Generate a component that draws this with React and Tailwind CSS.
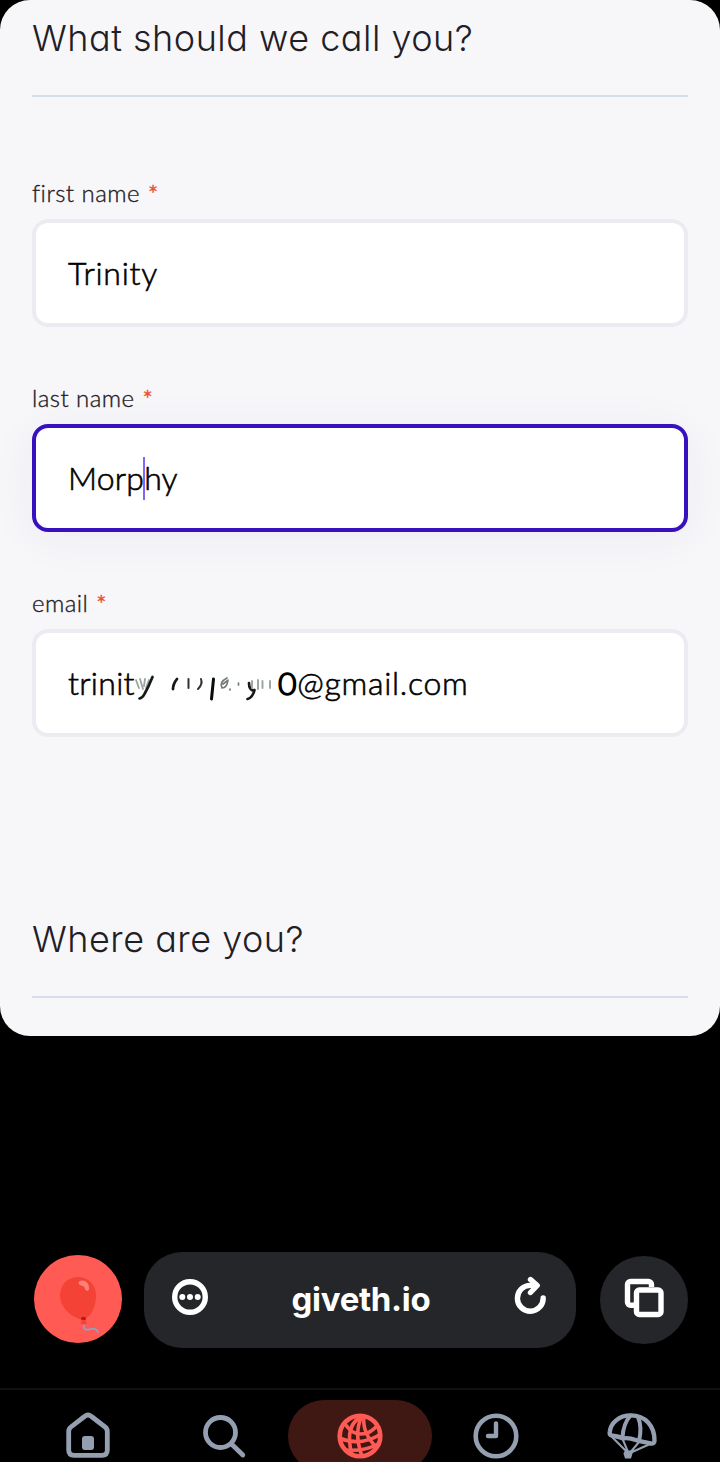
import React from "react";

function SectionTitle({ children }) {
  return (
    <div className="flex h-[77px] items-start border-b-2 border-[#d7ddea]">
      <h2 className="-mt-[2px] font-['Inter',sans-serif] text-[36px] leading-[40px] font-light tracking-[0.5px] whitespace-nowrap text-[#1f2025] [font-feature-settings:'cv11','ss03']">
        {children}
      </h2>
    </div>
  );
}

function Field({ label, focused, children }) {
  return (
    <div>
      <div className="flex h-[44px] items-start pt-[4px] font-['Lato',sans-serif] text-[24px] leading-[28px] font-light text-[#1f2025] [-webkit-text-stroke:0.35px] [font-variant-ligatures:none]">
        <span className="tracking-[0.45px]">{label}</span>
        <span className="ml-[8px] font-normal text-[#ee4f32]">*</span>
      </div>
      <div
        className={
          "flex h-[108px] items-center rounded-[16px] border-4 bg-white px-8 font-['Lato',sans-serif] text-[32px] leading-[40px] font-light text-black [-webkit-text-stroke:0.6px] [font-variant-ligatures:none] " +
          (focused
            ? "border-[#3811bf] shadow-[0_6px_48px_rgba(33,42,90,0.05)]"
            : "border-[#ebecf2]")
        }
      >
        {children}
      </div>
    </div>
  );
}

function Smudges() {
  return (
    <svg width="142" height="36" viewBox="134 666 142 36" className="shrink-0" fill="none" strokeLinecap="round">
      <path d="M136 681l3 8M140 680l3 10M145 680l-1 7M149 681l-3 8" stroke="#9ba39f" strokeWidth="1.8" />
      <path d="M152.500 678q-4 10-8 17-2 4-5 4.500" stroke="#151a18" strokeWidth="2.700" />
      <path d="M177 680q-4 5-4 10" stroke="#111815" strokeWidth="2.800" />
      <path d="M188.500 680v9M201 680q2 5-3 10" stroke="#2d3431" strokeWidth="2" />
      <path d="M213.500 680q-1 10-2 20" stroke="#080c0a" strokeWidth="3" />
      <path d="M227 679q-8 4-5 10q5 0 6-8M223 685l4-3M230 690v1M238.500 684v2" stroke="#737b77" strokeWidth="1.700" />
      <path d="M249 684q0 7 5 8M254.500 691q-2 8-7 9" stroke="#151a18" strokeWidth="2.700" />
      <path d="M252 682v7M258 681v9M262.500 682v7M270 682v7" stroke="#9ba39f" strokeWidth="1.900" />
    </svg>
  );
}

function Balloon() {
  return (
    <svg width="88" height="88" viewBox="34 1255 88 88" fill="none">
      <path d="M78 1277c10.500 0 18 7.800 18 18.500 0 13-6 21-12.500 24.500C72 1318 60 1308 60 1295.500c0-10.700 7.500-18.500 18-18.500Z" fill="#f44336" />
      <path d="M80 1281c5-2.500 10 3 9 8.500-1 2.200-3.500 1.600-4-.7-.5-2-1.500-2.800-3.500-3.300-3-.8-4-3.300-1.500-4.500Z" fill="#ff8078" />
      <path d="m82 1319-1.500 5h6.500l-2-5Z" fill="#f44336" />
      <rect x="81" y="1317" width="5" height="3" rx="1.300" fill="#b71c1c" />
      <path d="M84 1325.500c-1 5 3 4.500 7 3.500 4-.8 6 .3 7 3" stroke="#7fa9dc" strokeWidth="1.600" strokeLinecap="round" />
    </svg>
  );
}

function BrowserBar() {
  return (
    <div className="mt-[216px] flex h-24 items-center pr-8 pl-[34px]">
      <div className="-mt-[2px] size-[88px] shrink-0 overflow-hidden rounded-full bg-[#ff5b54]">
        <Balloon />
      </div>
      <div className="ml-[22px] flex h-24 w-[432px] items-center justify-between rounded-[38px] bg-[#252629] px-7">
        <svg width="36" height="36" viewBox="0 0 36 36" className="-mt-[6px]">
          <circle cx="18" cy="18" r="15.300" fill="none" stroke="#fff" strokeWidth="5.400" />
          <circle cx="10.300" cy="18" r="3" fill="#fff" />
          <circle cx="18" cy="18" r="3" fill="#fff" />
          <circle cx="25.700" cy="18" r="3" fill="#fff" />
        </svg>
        <span className="-mt-[2px] ml-[2px] font-['Inter',sans-serif] text-[33px] leading-10 font-bold tracking-[-0.3px] text-white">giveth.io</span>
        <svg width="36" height="42" viewBox="512 1275 36 42" className="-mt-[8px]" fill="none" stroke="#fff" strokeWidth="5.400" strokeLinecap="round" strokeLinejoin="round">
          <path d="M543.200 1298a12.900 12.900 0 1 1-12.900-12.600h5.500" />
          <path d="m530.500 1279.500 6.700 6-6.700 7" />
        </svg>
      </div>
      <div className="ml-6 flex size-[88px] items-center justify-center rounded-full bg-[#252629]">
        <svg width="40" height="40" viewBox="0 0 40 40" className="-mt-[4px]" fill="none" stroke="#fff" strokeWidth="5.400" strokeLinejoin="round">
          <path d="M10 27.300H6.500a3 3 0 0 1-3-3V6.500a3 3 0 0 1 3-3h18a3 3 0 0 1 3 3V9" />
          <rect x="12.500" y="12" width="24.500" height="24.500" rx="2.800" />
        </svg>
      </div>
    </div>
  );
}

function TabBar() {
  return (
    <nav className="mt-10 grid h-[74px] shrink-0 grid-cols-5 justify-items-center overflow-hidden border-t-2 border-[#111112] px-5 pt-[10px]">
      <svg width="48" height="62" viewBox="64 1400 48 62" fill="none" stroke="#94a0b1" strokeWidth="4.800" strokeLinejoin="round">
        <path d="M68.700 1431.500c0-2 .7-3.300 2.200-4.500l13.600-10.500c2.200-1.900 4.800-1.900 7 0l13.600 10.500c1.500 1.200 2.200 2.500 2.200 4.500v18.500c0 3.500-2 5.400-5.400 5.400H74.100c-3.400 0-5.400-1.900-5.400-5.400Z" />
        <rect x="82" y="1436" width="12" height="14" rx="3" fill="#94a0b1" stroke="none" />
      </svg>
      <svg width="48" height="62" viewBox="200 1400 48 62" fill="none" stroke="#94a0b1" strokeWidth="4.800" strokeLinecap="round">
        <circle cx="220.500" cy="1432.500" r="15" />
        <path d="m232 1444.500 10.800 10.500" />
      </svg>
      <div className="flex h-[72px] w-36 justify-center rounded-[36px] bg-[#3f1814]">
        <svg width="48" height="72" viewBox="336 1400 48 72" fill="none" stroke="#ff5b54" strokeWidth="3.600">
          <circle cx="360" cy="1436" r="20.300" strokeWidth="4.600" />
          <path d="M363 1416c-12 5-17 17-11 39M362 1416c-5 10-6 24 0 40M364 1416c-2 14 5 24 13 32" />
          <path d="M345 1424c6 8 10 10 16 10 7 0 11-3 16-8M339 1438c12 5 26 6 42-4M345 1450c12 1 23 0 33-6" />
        </svg>
      </div>
      <svg width="48" height="62" viewBox="472 1400 48 62" fill="none" stroke="#94a0b1" strokeWidth="4.600" strokeLinecap="round" strokeLinejoin="round">
        <circle cx="496" cy="1436" r="20.300" />
        <path d="M496 1423.500v12.500h-8" strokeWidth="4.400" />
      </svg>
      <svg width="54" height="62" viewBox="605 1400 54 62" fill="none" stroke="#94a0b1" strokeWidth="4.400" strokeLinecap="round" strokeLinejoin="round">
        <path d="M609.700 1432c1-9 9-16.600 21.300-16.600 13.800 0 23.500 10 23.500 25.200 0 2-1.200 3.200-3.400 3-4.500-1.800-11-1.800-15.400-3.600-5-2-9-2.200-13-1.600-4-2.300-9-2.200-11.500-3-1.200-.6-1.700-2-1.500-3.400Z" />
        <path d="M630.500 1415.500c-4.500 5-7.500 13-8 22M638 1417c2.500 6 3 15 1.200 23" strokeWidth="4" />
        <path d="m612 1437 15 15M623 1440l5 12M639 1442l-10 12M650 1444l-20 9" strokeWidth="2" />
        <path d="M625 1450.500h6l1.500 3-1.500 5h-6l-1.500-5Z" fill="#94a0b1" stroke="none" />
      </svg>
    </nav>
  );
}

export default function App() {
  return (
    <div className="flex h-[1462px] w-[720px] flex-col overflow-hidden bg-black">
      <main className="h-[1036px] shrink-0 overflow-hidden rounded-[30px] bg-[#f7f7fa] px-8 pt-5">
        <SectionTitle>What should we call you?</SectionTitle>
        <div className="mt-[78px] flex flex-col gap-[53px]">
          <Field label="first name">
            <span className="tracking-[0.75px]">Trinity</span>
          </Field>
          <Field label="last name" focused>
            <span className="tracking-[0.2px]">Morp</span>
            <span className="-mx-px h-[43px] w-[2px] bg-[#8066f2]" />
            <span>hy</span>
          </Field>
          <Field label="email">
            <span className="w-[66px] shrink-0 tracking-[0.3px] whitespace-nowrap">trinit</span>
            <Smudges />
            <span className="ml-[2px] tracking-[0.7px]">
              <span className="[-webkit-text-stroke:1.6px]">0</span>@gmail.com
            </span>
          </Field>
        </div>
        <div className="mt-[184px]">
          <SectionTitle>Where are you?</SectionTitle>
        </div>
      </main>
      <BrowserBar />
      <TabBar />
    </div>
  );
}
